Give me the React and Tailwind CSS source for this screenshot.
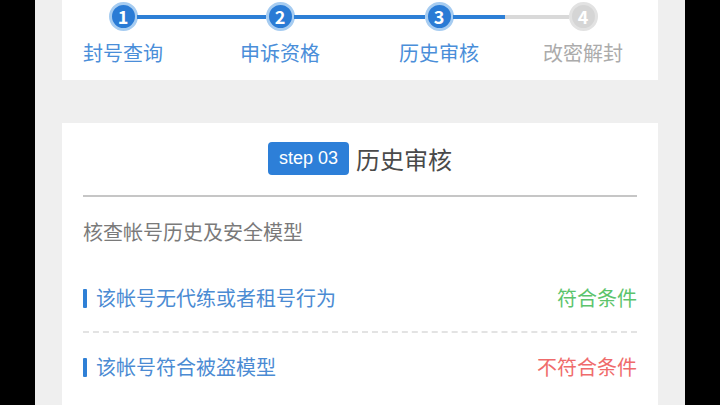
import React from 'react'

const steps = [
  { n: 1, label: '封号查询', done: true },
  { n: 2, label: '申诉资格', done: true },
  { n: 3, label: '历史审核', done: true },
  { n: 4, label: '改密解封', done: false },
]

function Step({ n, label, done }) {
  return (
    <div className="flex flex-col items-center w-[28px]">
      <div
        className={
          done
            ? 'w-[29px] h-[29px] rounded-full bg-[#2a7bd5] border-[3px] border-[#a6ccf1] flex items-center justify-center text-white font-bold text-[18px]'
            : 'w-[29px] h-[29px] rounded-full bg-[#d5d5d5] border-[3px] border-[#e2e2e2] flex items-center justify-center text-white font-bold text-[18px]'
        }
      >
        {n}
      </div>
      <div
        className={
          done
            ? 'mt-[11px] whitespace-nowrap text-[20px] leading-[22px] text-[#4a8ed9]'
            : 'mt-[11px] whitespace-nowrap text-[20px] leading-[22px] text-[#ababab]'
        }
      >
        {label}
      </div>
    </div>
  )
}

function CheckRow({ text, ok, last }) {
  return (
    <div
      className={
        last
          ? 'flex items-center justify-between h-[68px]'
          : 'flex items-center justify-between h-[68px] border-b-2 border-dashed border-[#e3e3e3]'
      }
    >
      <div className="flex items-center">
        <span className="w-[4px] h-[19px] bg-[#2f80d6] rounded-[1px]" />
        <span className="ml-[9px] text-[20px] text-[#4b8bd3]">{text}</span>
      </div>
      <span className={ok ? 'text-[20px] text-[#5cc46c]' : 'text-[20px] text-[#ef6b6b]'}>
        {ok ? '符合条件' : '不符合条件'}
      </span>
    </div>
  )
}

export default function App() {
  return (
    <div
      className="w-[720px] h-[405px] bg-black flex justify-center overflow-hidden"
      style={{ fontFamily: '"Noto Sans CJK SC", "Noto Sans", sans-serif' }}
    >
      <div className="w-[650px] h-full bg-[#efefef] px-[27px] flex flex-col">
        <div className="bg-white h-[80px] pt-[2px] pl-[47px]">
          <div className="flex items-start">
            <Step {...steps[0]} />
            <div className="w-[129px] h-[4px] mt-[13px] bg-[#2d7fd6]" />
            <Step {...steps[1]} />
            <div className="w-[131px] h-[4px] mt-[13px] bg-[#2d7fd6]" />
            <Step {...steps[2]} />
            <div className="w-[52px] h-[4px] mt-[13px] bg-[#2d7fd6]" />
            <div className="w-[64px] h-[4px] mt-[13px] bg-[#d9d9d9]" />
            <Step {...steps[3]} />
          </div>
        </div>

        <div className="mt-[43px] flex-1 bg-white px-[21px] pt-[19px]">
          <div className="flex items-center justify-center gap-[7px]">
            <span
              className="h-[33px] px-[11px] rounded-[4px] bg-[#2d7fd8] text-white text-[18px] flex items-center"
              style={{ fontFamily: '"Liberation Sans", Arial, sans-serif' }}
            >
              step 03
            </span>
            <span className="text-[24px] text-[#4a4a4a] leading-[33px]">历史审核</span>
          </div>
          <div className="mt-[20px] border-t-2 border-[#c6c6c6]" />
          <div className="mt-[23px] text-[20px] leading-[24px] text-[#7a7a7a]">核查帐号历史及安全模型</div>
          <div className="mt-[21px]">
            <CheckRow text="该帐号无代练或者租号行为" ok />
            <CheckRow text="该帐号符合被盗模型" ok={false} last />
          </div>
        </div>
      </div>
    </div>
  )
}
